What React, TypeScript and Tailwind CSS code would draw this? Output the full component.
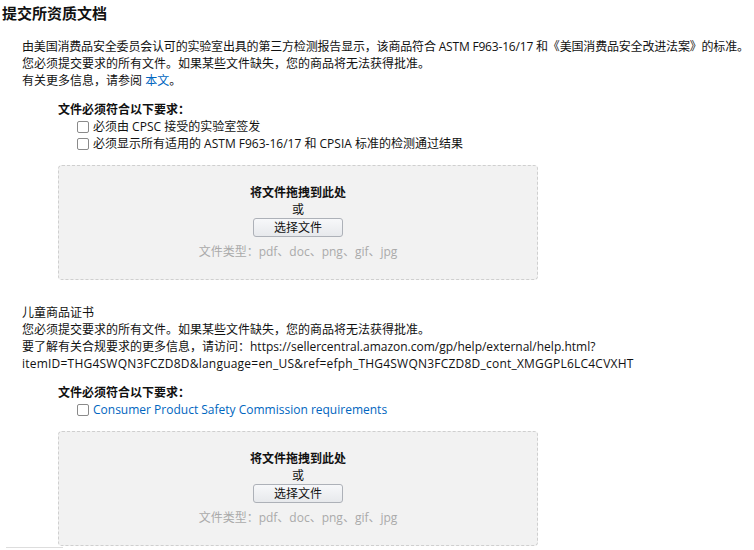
const FILE_TYPES = "文件类型：pdf、doc、png、gif、jpg";

const Checkbox = () => (
  <span className="inline-block w-[12px] h-[12px] border border-[#8a8a8a] rounded-[2px] bg-white shrink-0" />
);

const Requirement = ({ children, link }: { children: React.ReactNode; link?: boolean }) => (
  <div className="flex items-center gap-[4px] pl-[19px] h-[17px]">
    <Checkbox />
    <span className={link ? "text-[#0066c0]" : ""}>{children}</span>
  </div>
);

const DropZone = () => (
  <div className="ml-[58px] w-[480px] h-[115px] rounded-[4px] border border-dashed border-[#cfcfcf] bg-[#f2f2f2] flex flex-col items-center pt-[18px]">
    <div className="font-bold leading-[17px]">将文件拖拽到此处</div>
    <div className="leading-[17px]">或</div>
    <button className="w-[90px] h-[19px] rounded-[3px] border border-[#adb1b8] bg-gradient-to-b from-[#f7f8fa] to-[#e7e9ec] text-[12px] leading-[17px] text-[#111]">
      选择文件
    </button>
    <div className="mt-[6px] leading-[17px] text-[#aaaaaa]">{FILE_TYPES}</div>
  </div>
);

export default function App() {
  return (
    <div
      className="w-[754px] h-[550px] overflow-hidden bg-white text-[#111] text-[12px] leading-[17px] whitespace-nowrap"
      style={{ fontFamily: '"Open Sans", "Noto Sans CJK SC", sans-serif' }}
    >
      <h1 className="pl-[2px] pt-[3px] text-[15px] leading-[20px] font-bold">提交所资质文档</h1>

      {/* intro */}
      <div className="mt-[15px] pl-[22px]">
        <p className="tracking-[-0.18px]">
          由美国消费品安全委员会认可的实验室出具的第三方检测报告显示，该商品符合 ASTM F963-16/17 和《美国消费品安全改进法案》的标准。
        </p>
        <p>您必须提交要求的所有文件。如果某些文件缺失，您的商品将无法获得批准。</p>
        <p>
          有关更多信息，请参阅 <a className="text-[#0066c0]">本文</a>。
        </p>
      </div>

      <div className="mt-[12px] pl-[58px]">
        <div className="font-bold">文件必须符合以下要求：</div>
        <Requirement>必须由 CPSC 接受的实验室签发</Requirement>
        <Requirement>必须显示所有适用的 ASTM F963-16/17 和 CPSIA 标准的检测通过结果</Requirement>
      </div>

      <div className="mt-[13px]">
        <DropZone />
      </div>

      {/* children's product certificate */}
      <div className="mt-[24px] pl-[22px]">
        <p>儿童商品证书</p>
        <p>您必须提交要求的所有文件。如果某些文件缺失，您的商品将无法获得批准。</p>
        <p>要了解有关合规要求的更多信息，请访问：https://sellercentral.amazon.com/gp/help/external/help.html?</p>
        <p className="tracking-[0.22px]">
          itemID=THG4SWQN3FCZD8D&amp;language=en_US&amp;ref=efph_THG4SWQN3FCZD8D_cont_XMGGPL6LC4CVXHT
        </p>
      </div>

      <div className="mt-[12px] pl-[58px]">
        <div className="font-bold">文件必须符合以下要求：</div>
        <Requirement link>Consumer Product Safety Commission requirements</Requirement>
      </div>

      <div className="mt-[13px]">
        <DropZone />
      </div>

      <div className="mt-[1px] ml-[6px] w-[57px] h-px bg-[#dddddd]" />
    </div>
  );
}
